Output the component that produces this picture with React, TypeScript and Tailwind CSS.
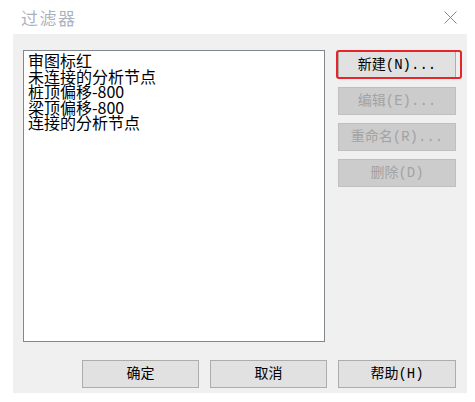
// App.tsx
// 过滤器 dialog: filter list on the left, action buttons on the right,
// OK / Cancel / Help along the bottom.

const FILTERS = ["审图标红", "未连接的分析节点", "桩顶偏移-800", "梁顶偏移-800", "连接的分析节点"];

const FONT = "font-['Noto_Sans_CJK_SC','Noto_Sans',sans-serif]";

function DlgButton({
  label,
  disabled,
  className = "",
}: {
  label: string;
  disabled?: boolean;
  className?: string;
}) {
  return (
    <button
      disabled={disabled}
      className={`h-[28px] flex items-center justify-center border text-[14px] leading-none font-['Liberation_Mono','Noto_Sans_CJK_SC',monospace] ${
        disabled
          ? "bg-[#cccccc] border-[#bfbfbf] text-[#a3a3a3]"
          : "bg-[#e1e1e1] border-[#adadad] text-black"
      } ${className}`}
    >
      {label}
    </button>
  );
}

export default function App() {
  return (
    <div className={`w-[475px] h-[402px] bg-white ${FONT}`}>
      {/* Title bar */}
      <header className="h-[34px] flex items-center justify-between pl-[21px] pr-[18px]">
        <span className="text-[17px] tracking-[1.5px] text-[#aab2be] leading-none">过滤器</span>
        <svg width="13" height="13" viewBox="0 0 13 13" className="block">
          <path d="M0.5 0.5 L12.5 12.5 M12.5 0.5 L0.5 12.5" stroke="#8a8a8a" strokeWidth="1" />
        </svg>
      </header>

      {/* Dialog body */}
      <div className="ml-[13px] w-[454px] h-[359px] bg-[#f0f0f0] pt-[16px] px-[10px]">
        <div className="flex">
          {/* Filter list */}
          <ul className="w-[302px] h-[292px] bg-white border border-[#828790] pl-[4px] pt-[2px] text-[16px] leading-[15.5px] text-black">
            {FILTERS.map((f) => (
              <li key={f} className="whitespace-nowrap">
                {f}
              </li>
            ))}
          </ul>

          {/* Side actions */}
          <div className="ml-[13px] pt-[1px] flex flex-col gap-[8px]">
            <div className="relative">
              <DlgButton label="新建(N)..." className="w-[118px]" />
              <div className="absolute -left-[2px] -top-[1px] w-[126px] h-[29px] border-2 border-[#e5262a] rounded-[3px]" />
            </div>
            <DlgButton label="编辑(E)..." disabled className="w-[118px]" />
            <DlgButton label="重命名(R)..." disabled className="w-[118px]" />
            <DlgButton label="删除(D)" disabled className="w-[118px]" />
          </div>
        </div>

        {/* Bottom actions */}
        <div className="flex justify-end gap-[11px] mt-[18px] pr-[1px]">
          <DlgButton label="确定" className="w-[117px]" />
          <DlgButton label="取消" className="w-[117px]" />
          <DlgButton label="帮助(H)" className="w-[118px]" />
        </div>
      </div>
    </div>
  );
}
